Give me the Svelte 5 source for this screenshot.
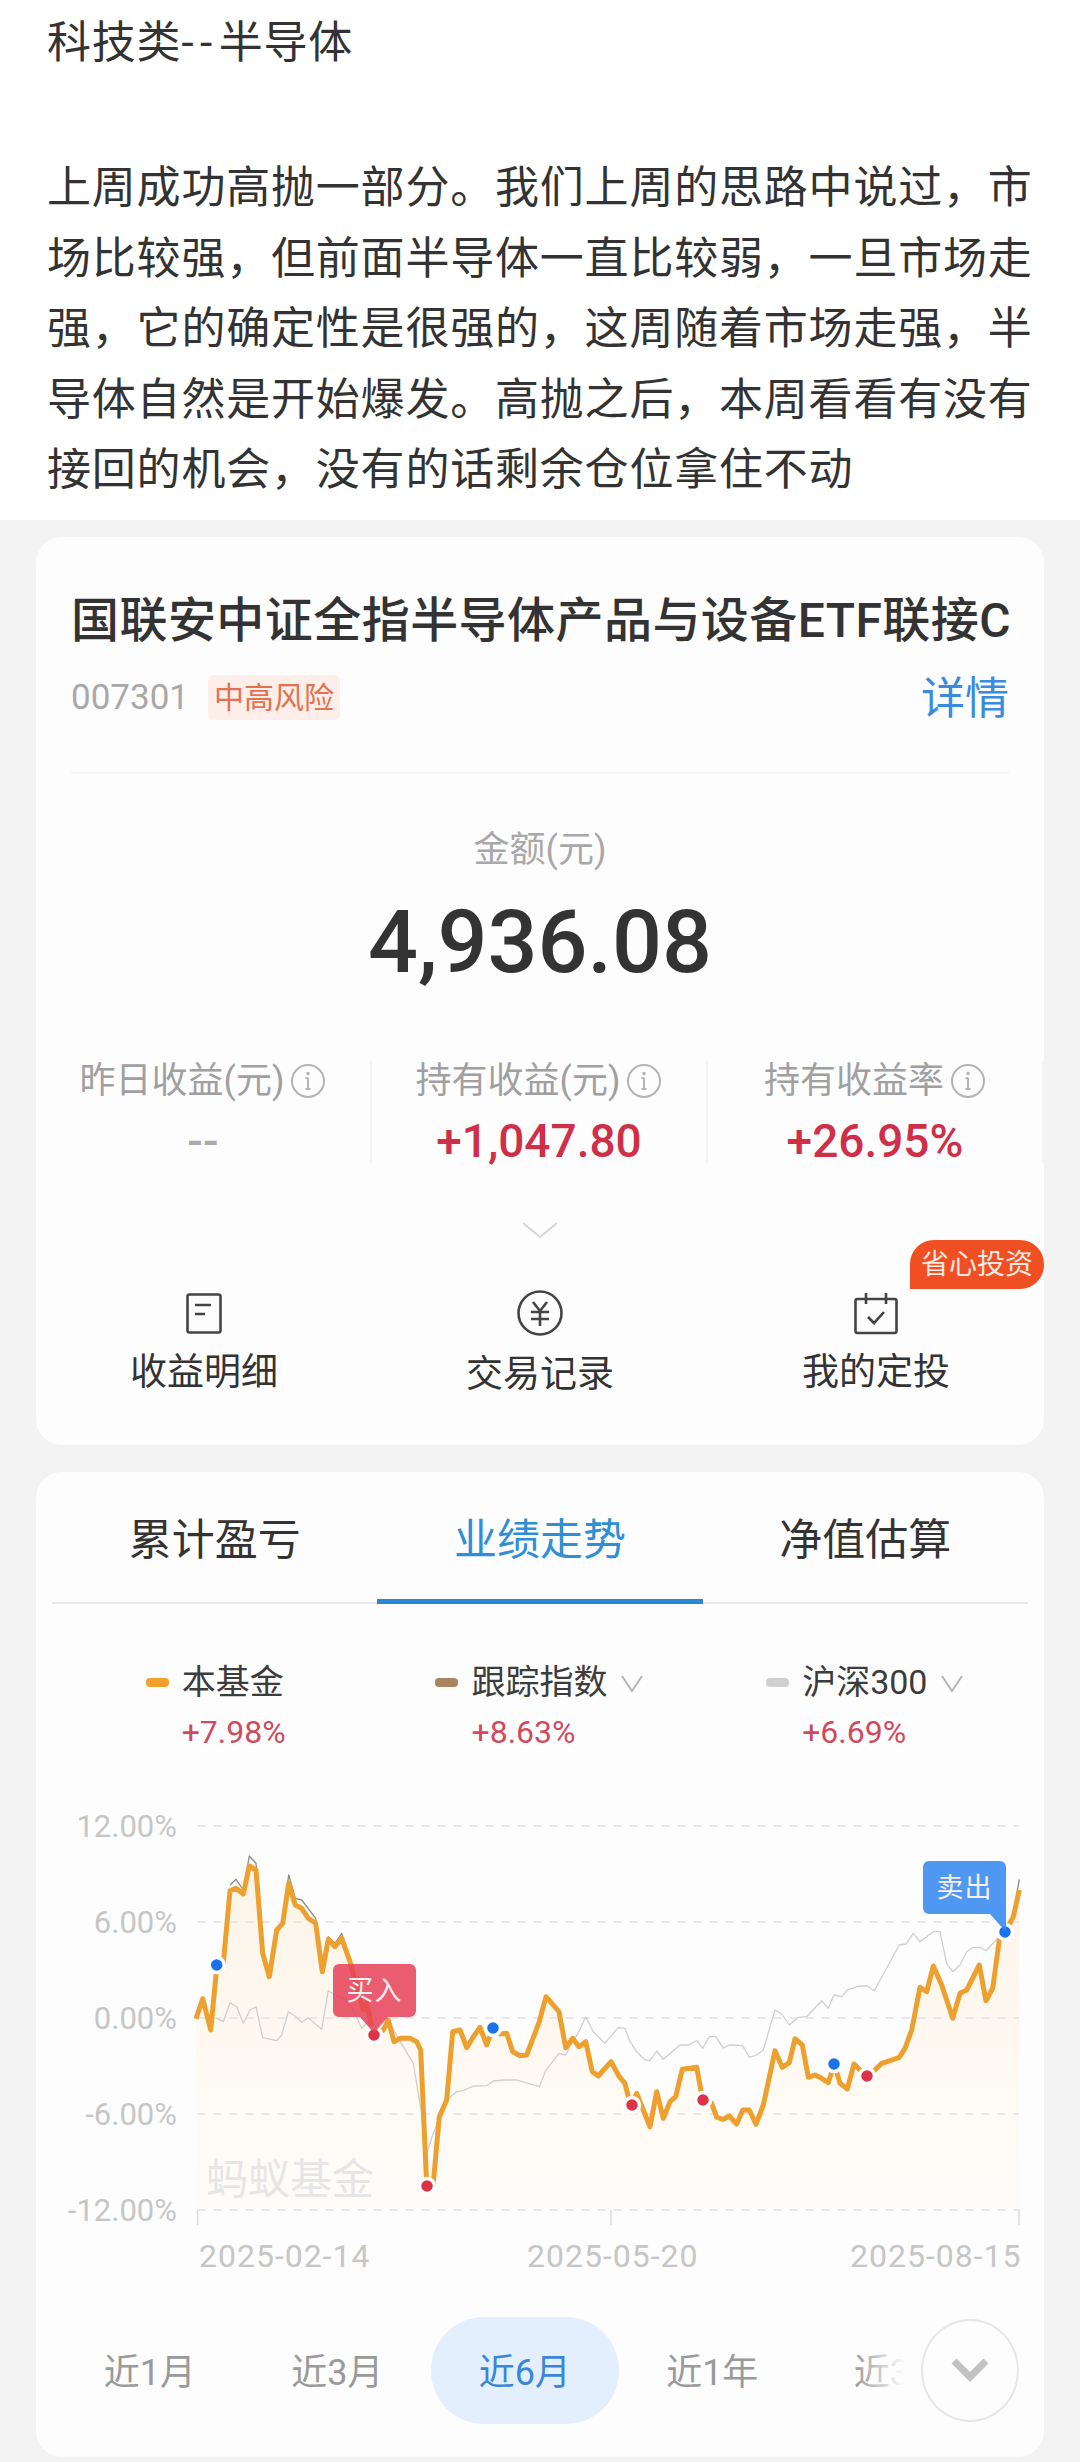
<script>
  // Chart points were read off the screenshot: one unit is 1/3 px, left half then right half
  const left = [[48,716],[68,656],[92,750],[108,585],[112,556],[130,550],[150,332],[168,325],[190,342],[208,258],[228,270],[248,520],[268,590],[290,450],[308,430],[326,310],[346,375],[365,385],[385,415],[407,430],[427,575],[445,478],[465,500],[485,475],[510,545],[530,620],[550,690],[560,670],[575,740],[583,765],[610,750],[625,720],[642,785],[660,775],[690,775],[710,785],[722,810],[740,1215],[760,1210],[778,1010],[800,960],[818,755],[840,750],[860,803],[880,770],[900,742],[920,795],[938,745],[960,762],[980,760],[998,815],[1020,827],[1040,825],[1078,725],[1098,650],[1137,695],[1157,803],[1178,775],[1197,800],[1217,785],[1237,875],[1255,888],[1293,845],[1318,890],[1335,910]];
  const right = [[0,970],[7,975],[20,940],[40,990],[60,1040],[80,935],[100,1015],[120,965],[137,950],[157,868],[200,862],[218,960],[245,970],[260,1012],[280,1018],[298,1008],[320,1032],[338,990],[358,990],[378,1033],[400,975],[435,812],[457,862],[478,848],[495,776],[517,795],[535,892],[555,885],[575,895],[595,908],[613,852],[630,910],[652,927],[672,852],[690,870],[712,888],[735,870],[755,850],[780,842],[808,832],[825,805],[845,750],[870,622],[890,635],[910,558],[935,615],[968,715],[990,640],[1010,630],[1048,555],[1068,662],[1088,625],[1108,480],[1125,456],[1150,410],[1168,330]];
  const hs300Left = [[108,715],[130,725],[150,668],[170,680],[190,730],[210,690],[228,680],[248,773],[290,782],[305,765],[325,695],[345,708],[365,727],[385,713],[425,748],[445,632],[465,645],[490,655],[520,690],[545,745],[560,730],[600,745],[635,740],[655,775],[700,850],[725,1000],[740,1120],[760,1060],[800,960],[830,935],[850,932],[880,918],[920,917],[940,903],[970,900],[1010,900],[1078,920],[1098,870],[1137,820],[1157,825],[1178,785],[1197,755],[1217,710],[1240,755],[1275,790],[1315,742],[1335,745]];
  const hs300Right = [[0,785],[20,815],[45,840],[60,842],[80,813],[100,838],[150,795],[175,795],[200,782],[218,805],[238,770],[258,770],[280,805],[298,795],[338,797],[358,832],[380,825],[400,810],[435,690],[455,702],[478,735],[505,712],[530,710],[575,662],[595,685],[612,645],[635,650],[655,628],[690,618],[712,618],[733,632],[808,495],[828,492],[850,460],[870,485],[910,455],[930,455],[950,550],[968,575],[990,555],[1010,515],[1030,502],[1050,502],[1068,512],[1108,470],[1125,456]];
  const trackLeft = [[150,315],[168,298],[190,330],[208,228],[228,250],[248,510]];
  const trackMid = [[308,420],[326,285],[346,355],[365,360],[407,415],[427,570],[445,470],[465,490],[485,460],[510,540]];
  const trackTail = [[1150+1350,400],[1168+1350,298]];

  const px = ([x, y]) => [180 + x / 3, 1780 + y / 3];
  const join = (a, b) => [...a, ...b.map(([x, y]) => [x + 1350, y])].map(px);
  const toPath = (pts) => pts.map(([x, y]) => `${x.toFixed(1)},${y.toFixed(1)}`).join(" ");

  const fund = join(left, right);
  const fundLine = toPath(fund);
  const fundArea = toPath([[197.6, 2210], ...fund, [1019, 2210]]);
  const hs300 = toPath(join(hs300Left, hs300Right));
  const tracks = [trackLeft, trackMid, trackTail].map((t) => toPath(t.map(px)));

  const grid = [
    { y: 1826, label: "12.00%" },
    { y: 1922, label: "6.00%" },
    { y: 2018, label: "0.00%" },
    { y: 2114, label: "-6.00%" },
    { y: 2210, label: "-12.00%" },
  ];
  const dots = [
    { x: 216.7, y: 1965, kind: "sell" },
    { x: 374, y: 2035, kind: "buy" },
    { x: 427, y: 2186, kind: "buy" },
    { x: 493, y: 2028, kind: "sell" },
    { x: 632, y: 2105, kind: "buy" },
    { x: 703, y: 2100, kind: "buy" },
    { x: 834, y: 2064, kind: "sell" },
    { x: 867, y: 2076, kind: "buy" },
    { x: 1005, y: 1932, kind: "sell" },
  ];

  const metrics = [
    { label: "昨日收益(元)", value: "--", empty: true },
    { label: "持有收益(元)", value: "+1,047.80" },
    { label: "持有收益率", value: "+26.95%" },
  ];
  const tabs = ["累计盈亏", "业绩走势", "净值估算"];
  const legend = [
    { name: "本基金", value: "+7.98%", color: "#f2a12c" },
    { name: "跟踪指数", value: "+8.63%", color: "#a9845f", more: true },
    { name: "沪深300", value: "+6.69%", color: "#d0d0d0", more: true },
  ];
  const ranges = ["近1月", "近3月", "近6月", "近1年", "近3年"];
  let activeTab = 1;
  let activeRange = 2;
</script>

<div class="note">
  <p class="heading">科技类<span class="dashes">--</span>半导体</p>
  <p>上周成功高抛一部分。我们上周的思路中说过，市场比较强，但前面半导体一直比较弱，一旦市场走强，它的确定性是很强的，这周随着市场走强，半导体自然是开始爆发。高抛之后，本周看看有没有接回的机会，没有的话剩余仓位拿住不动</p>
</div>

<div class="page">
  <section class="card summary">
    <div class="head">
      <h1>国联安中证全指半导体产品与设备ETF联接C</h1>
      <div class="code-row">
        <span class="code">007301</span>
        <span class="risk">中高风险</span>
        <span class="detail">详情</span>
      </div>
    </div>

    <div class="amount-label">金额(元)</div>
    <div class="amount">4,936.08</div>

    <div class="metrics">
      {#each metrics as m}
        <div class="metric">
          <div class="metric-label">
            {m.label}
            <svg class="info" viewBox="0 0 36 36" width="36" height="36">
              <circle cx="18" cy="18" r="16" />
              <path d="M18 15v11M15.5 15H18M15.5 26h5" />
              <circle class="info-dot" cx="18" cy="10.5" r="1.7" />
            </svg>
          </div>
          <div class="metric-value" class:empty={m.empty}>{m.value}</div>
        </div>
      {/each}
    </div>

    <svg class="expand" viewBox="0 0 38 18" width="38" height="18">
      <path d="M2 2l17 14L36 2" />
    </svg>

    <span class="badge">省心投资</span>
    <div class="actions">
      <div class="action">
        <svg class="icon" viewBox="0 0 46 46" width="46" height="46">
          <rect x="6.5" y="4.5" width="33" height="38" rx="2" />
          <path d="M14 15h16M14 24h10" />
        </svg>
        <span>收益明细</span>
      </div>
      <div class="action">
        <svg class="icon" viewBox="0 0 46 46" width="46" height="46">
          <circle cx="23" cy="23" r="21.5" />
          <path d="M16 12l7 9 7-9M14 22h18M14 29h18M23 21v15" />
        </svg>
        <span class="lower">交易记录</span>
      </div>
      <div class="action">
        <svg class="icon" viewBox="0 0 46 46" width="46" height="46">
          <rect x="2.5" y="9" width="41" height="34" rx="2" />
          <path d="M13 3v11M33 3v11M15 27l6 6 10-11" />
        </svg>
        <span>我的定投</span>
      </div>
    </div>
  </section>

  <section class="card trend">
    <div class="tabs">
      {#each tabs as t, i}
        <div class="tab" class:active={i === activeTab}>{t}</div>
      {/each}
    </div>

    <div class="legend">
      {#each legend as l}
        <div class="legend-item">
          <div class="legend-top">
            <i class="swatch" style="background: {l.color}"></i>
            <span class="legend-name">{l.name}</span>
            {#if l.more}
              <svg class="legend-more" viewBox="0 0 24 24" width="24" height="24">
                <path d="M2 6l10 15L22 6" />
              </svg>
            {/if}
          </div>
          <span class="legend-value">{l.value}</span>
        </div>
      {/each}
    </div>

    <svg class="chart" viewBox="36 1790 1008 500" width="1008" height="500">
      <defs>
        <linearGradient id="areaFill" x1="0" y1="0" x2="0" y2="1">
          <stop offset="0" stop-color="#fdf4e7" />
          <stop offset="1" stop-color="#fefcfa" />
        </linearGradient>
      </defs>

      <polygon points={fundArea} fill="url(#areaFill)" />

      {#each grid as g}
        <line class="grid" x1="197.6" x2="1019" y1={g.y} y2={g.y} />
        <text class="y-label" x="177" y={g.y + 11}>{g.label}</text>
      {/each}
      <path class="tick" d="M197.6 2210v15M611 2210v15M1019 2210v15" />

      <text class="watermark" x="206" y="2194">蚂蚁基金</text>

      <polyline class="hs300" points={hs300} />
      {#each tracks as t}
        <polyline class="track" points={t} />
      {/each}
      <polyline class="fund" points={fundLine} />

      {#each dots as d}
        <circle class="dot {d.kind}" cx={d.x} cy={d.y} r="7.5" />
      {/each}

      <path class="flag buy-flag" d="M339 1964h71a6 6 0 0 1 6 6v41a6 6 0 0 1-6 6h-22l-14 16-14-16h-21a6 6 0 0 1-6-6v-41a6 6 0 0 1 6-6z" />
      <text class="flag-text" x="374.5" y="2000">买入</text>
      <path class="flag sell-flag" d="M929 1861h71a6 6 0 0 1 6 6v65l-16-18h-61a6 6 0 0 1-6-6v-41a6 6 0 0 1 6-6z" />
      <text class="flag-text" x="964.5" y="1897">卖出</text>

      <text class="x-label" x="199" y="2267">2025-02-14</text>
      <text class="x-label" x="527" y="2267">2025-05-20</text>
      <text class="x-label" x="850" y="2267">2025-08-15</text>
    </svg>

    <div class="ranges">
      {#each ranges as r, i}
        <div class="range" class:active={i === activeRange}>{r}</div>
      {/each}
      <div class="range-fade"></div>
      <div class="range-more">
        <svg viewBox="0 0 40 32" width="40" height="32">
          <path d="M4 6l16 16L36 6" />
        </svg>
      </div>
    </div>
  </section>
</div>

<style>
  :global(body) {
    margin: 0;
    background: #f3f3f3;
  }
  .note,
  .page {
    font-family: Roboto, "Noto Sans CJK SC", sans-serif;
  }
  .note {
    background: #fff;
    color: #333;
    padding: 8px 46px 15px 47px;
    font-size: 44px;
    line-height: 70.5px;
    letter-spacing: 0.8px;
    height: 497px;
  }
  .note p {
    margin: 0;
  }
  .note .heading {
    margin-bottom: 74.5px;
  }
  .dashes {
    letter-spacing: 6.5px;
  }
  .page {
    padding: 17px 36px 5px;
    display: flex;
    flex-direction: column;
    gap: 27px;
  }
  .card {
    position: relative;
    background: #fdfdfd;
    border-radius: 26px;
  }

  .summary {
    height: 908px;
  }
  .head {
    margin: 0 35px;
    padding-top: 54px;
    padding-bottom: 50px;
    border-bottom: 2px solid #f4f4f4;
  }
  h1 {
    margin: 0;
    font-size: 48px;
    line-height: 60px;
    font-weight: 500;
    letter-spacing: 0.45px;
    color: #333;
    white-space: nowrap;
  }
  .code-row {
    display: flex;
    align-items: center;
    height: 50px;
    margin-top: 21px;
  }
  .code {
    font-size: 35px;
    color: #a8a8a8;
  }
  .risk {
    margin-left: 19px;
    padding: 0 6px;
    height: 45px;
    line-height: 45px;
    font-size: 30px;
    color: #e2724f;
    background: #fdeee9;
    border-radius: 6px;
  }
  .detail {
    margin-left: auto;
    margin-top: -4px;
    font-size: 44px;
    color: #3a8ade;
  }
  .amount-label {
    margin-top: 51px;
    text-align: center;
    font-size: 36px;
    line-height: 50px;
    color: #a8a8a8;
  }
  .amount {
    margin-top: 17px;
    text-align: center;
    font-size: 88px;
    line-height: 100px;
    font-weight: 500;
    color: #333;
  }
  .metrics {
    display: grid;
    grid-template-columns: repeat(3, 1fr);
    margin-top: 69px;
  }
  .metric {
    height: 102px;
    text-align: center;
    border-right: 2px solid #f4f4f4;
  }
  .metric-label {
    display: flex;
    justify-content: center;
    align-items: center;
    gap: 6px;
    font-size: 36px;
    line-height: 40px;
    color: #a0a0a0;
  }
  .info {
    fill: none;
    stroke: #b4b4b4;
    stroke-width: 2;
  }
  .info-dot {
    fill: #b4b4b4;
    stroke: none;
  }
  .metric-value {
    margin-top: 15px;
    font-size: 46px;
    line-height: 50px;
    font-weight: 500;
    color: #cf2f48;
  }
  .metric-value.empty {
    color: #aaa;
  }
  .expand {
    display: block;
    margin: 58px auto 0;
    fill: none;
    stroke: #d6d6d6;
    stroke-width: 2;
  }
  .badge {
    position: absolute;
    top: 703px;
    right: 0;
    width: 134px;
    height: 49px;
    line-height: 49px;
    text-align: center;
    font-size: 28px;
    color: #fde9e2;
    background: #f04e23;
    border-radius: 24px 24px 24px 0;
  }
  .actions {
    display: grid;
    grid-template-columns: repeat(3, 1fr);
    margin-top: 51px;
  }
  .action {
    display: flex;
    flex-direction: column;
    align-items: center;
    font-size: 37px;
    line-height: 50px;
    color: #333;
  }
  .action span {
    margin-top: 12px;
  }
  .action .lower {
    margin-top: 14px;
  }
  .icon {
    fill: none;
    stroke: #444;
    stroke-width: 2.6;
  }

  .tabs {
    display: grid;
    grid-template-columns: repeat(3, 1fr);
    margin: 0 16px;
    padding-top: 40px;
    border-bottom: 2px solid #e9e9e9;
  }
  .tab {
    height: 87px;
    margin-bottom: -2px;
    border-bottom: 5px solid transparent;
    text-align: center;
    font-size: 43px;
    line-height: 56px;
    color: #333;
  }
  .tab.active {
    color: #2f8fd6;
    border-bottom-color: #2b87cf;
  }
  .legend {
    display: grid;
    grid-template-columns: repeat(3, 1fr);
    justify-items: center;
    margin: 58px 16px 0;
  }
  .legend-item {
    display: flex;
    flex-direction: column;
    gap: 10px;
  }
  .legend-top {
    display: flex;
    align-items: center;
    gap: 13px;
  }
  .swatch {
    width: 23px;
    height: 9px;
    border-radius: 4px;
  }
  .legend-name {
    font-size: 34px;
    line-height: 40px;
    color: #3c3c3c;
  }
  .legend-more {
    fill: none;
    stroke: #b5b5b5;
    stroke-width: 2;
  }
  .legend-value {
    width: 0;
    white-space: nowrap;
    margin-left: 36px;
    font-size: 32px;
    line-height: 40px;
    color: #cf4a5e;
  }
  .chart {
    display: block;
    margin-top: 38px;
  }
  .grid {
    stroke: #e8e8e8;
    stroke-width: 2;
    stroke-dasharray: 8 8;
  }
  .tick {
    fill: none;
    stroke: #dcdcdc;
    stroke-width: 1.5;
  }
  .y-label {
    font-size: 31px;
    fill: #c6c6c6;
    text-anchor: end;
  }
  .x-label {
    font-size: 32px;
    letter-spacing: 1px;
    fill: #c6c6c6;
  }
  .watermark {
    font-size: 42px;
    fill: #e6e6e6;
  }
  .hs300,
  .track,
  .fund {
    fill: none;
    stroke-linejoin: round;
  }
  .hs300 {
    stroke: #cfcfcf;
    stroke-width: 1.3;
  }
  .track {
    stroke: #8f8a80;
    stroke-width: 1.3;
  }
  .fund {
    stroke: #eda02d;
    stroke-width: 5;
  }
  .dot {
    stroke: #fff;
    stroke-width: 3.5;
  }
  .dot.buy {
    fill: #dc3347;
  }
  .dot.sell {
    fill: #1a73e8;
  }
  .flag {
    opacity: 0.85;
  }
  .buy-flag {
    fill: #e63f57;
  }
  .sell-flag {
    fill: #2f86f0;
  }
  .flag-text {
    font-size: 27px;
    letter-spacing: 1px;
    fill: #fbeff0;
    text-anchor: middle;
  }

  .ranges {
    position: relative;
    display: flex;
    align-items: center;
    height: 107px;
    margin-top: 27px;
    padding-left: 20px;
    margin-bottom: 33px;
    overflow: hidden;
  }
  .range {
    flex: 0 0 187.5px;
    box-sizing: border-box;
    padding-top: 5px;
    text-align: center;
    font-size: 36px;
    line-height: 102px;
    color: #9a9a9a;
  }
  .range.active {
    color: #3a86d8;
    background: #e4effd;
    border-radius: 53px;
  }
  .range-fade {
    position: absolute;
    top: 0;
    bottom: 0;
    right: 0;
    width: 190px;
    background: linear-gradient(to right, rgba(253, 253, 253, 0), #fdfdfd 27%);
  }
  .range-more {
    position: absolute;
    right: 25px;
    top: 2px;
    box-sizing: border-box;
    width: 98px;
    height: 103px;
    border: 2px solid #e6e6e6;
    border-radius: 50%;
    display: flex;
    align-items: center;
    justify-content: center;
    background: #fdfdfd;
  }
  .range-more svg {
    fill: none;
    stroke: #c2c2c2;
    stroke-width: 7;
  }
</style>
